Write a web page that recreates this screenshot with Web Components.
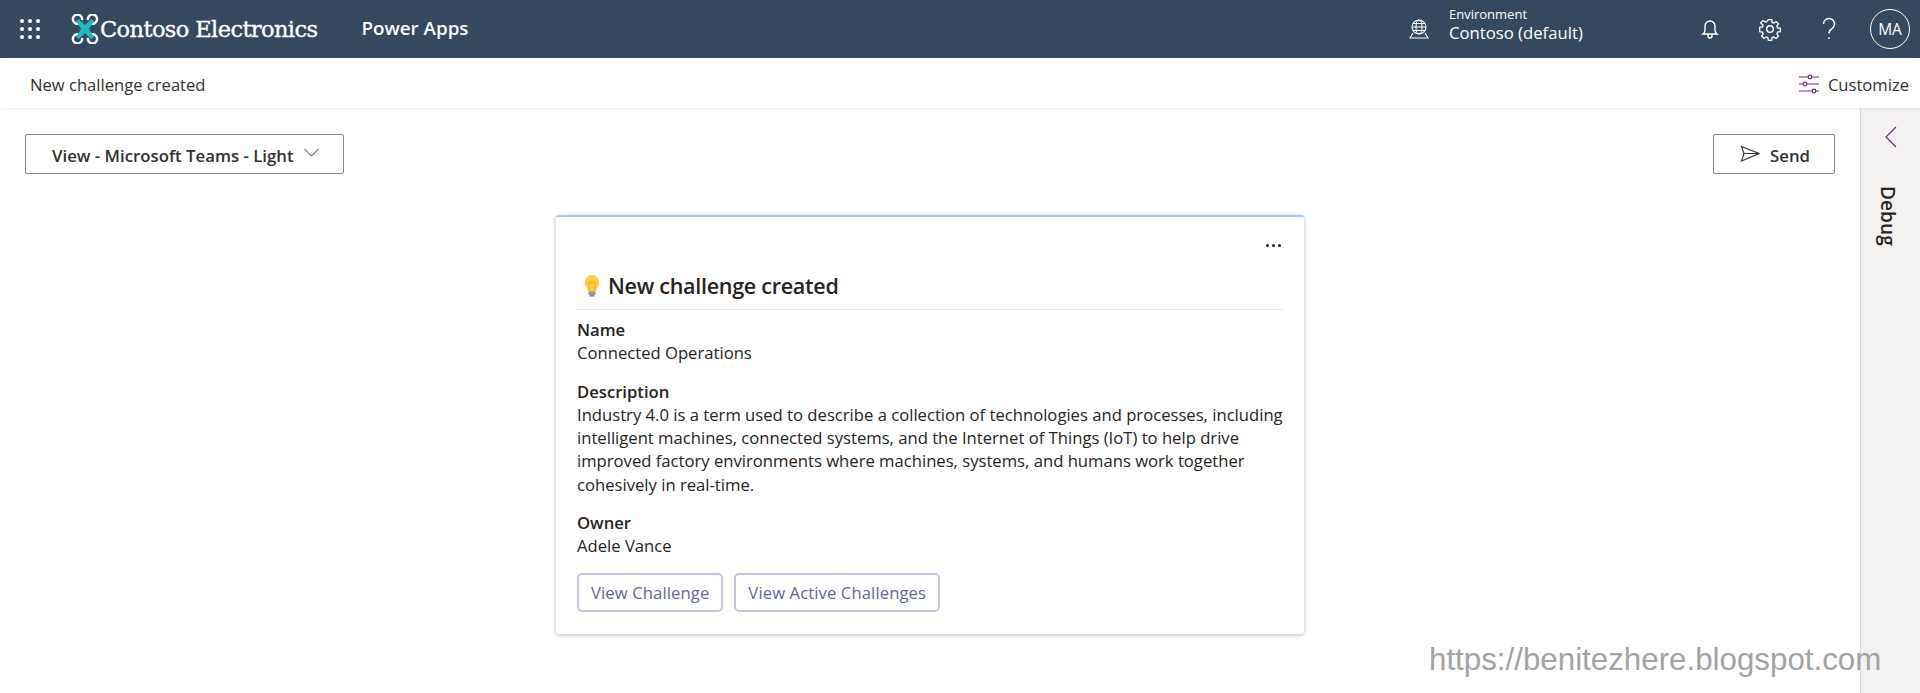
<!DOCTYPE html>
<html lang="en"><head><meta charset="utf-8"><title>Contoso</title>
<style>
html,body{margin:0;height:100%;overflow:hidden;background:#fff}
body{font-family:"Open Sans","Noto Sans",sans-serif;color:#252423}
</style></head><body>
<app-shell>
<top-bar></top-bar>
<sub-bar>New challenge created</sub-bar>
<main-area>
<tool-row></tool-row>
<adaptive-card></adaptive-card>
</main-area>
<debug-panel></debug-panel>
<water-mark>https://benitezhere.blogspot.com</water-mark>
</app-shell>
<script>
const def=(n,html)=>customElements.define(n,class extends HTMLElement{constructor(){super();this.attachShadow({mode:'open'}).innerHTML=html}});
def('app-shell',`<style>:host{display:grid;grid-template-columns:1fr 60px;grid-template-rows:58px 50px 1fr;height:693px;position:relative;width:1920px}
::slotted(top-bar),::slotted(sub-bar){grid-column:1/3}</style><slot></slot>`);
def('top-bar',`<style>:host{display:flex;align-items:center;background:#34495f;color:#fff;height:58px}
.waffle{margin-left:20px;width:20px;height:20px}
.logo{margin-left:30px;width:30px;height:30px}
.brand{font:400 22.500px "DejaVu Serif",serif;-webkit-text-stroke:.35px #fff;letter-spacing:-.6px;white-space:nowrap}
.app{font-weight:600;font-size:18.800px;margin-left:44px;margin-top:-2px}
.sp{flex:1}
.globe{width:22px;height:22px;margin-right:19px}
.env{display:flex;flex-direction:column;width:251px;margin-top:-9px}
.env small{font-size:13px;line-height:15px}
.env span{font-size:16.700px;line-height:21px}
.ic{width:20px;height:24px;display:flex;align-items:center;justify-content:center}
.av{width:38px;height:38px;border:1px solid #fff;border-radius:50%;display:flex;align-items:center;justify-content:center;font-size:15.500px;margin:0 10px 0 31px;box-sizing:content-box}
</style>
<svg class="waffle" viewBox="0 0 20 20" fill="#fff"><circle cx="2" cy="2" r="2"/><circle cx="10" cy="2" r="2"/><circle cx="18" cy="2" r="2"/><circle cx="2" cy="10" r="2"/><circle cx="10" cy="10" r="2"/><circle cx="18" cy="10" r="2"/><circle cx="2" cy="18" r="2"/><circle cx="10" cy="18" r="2"/><circle cx="18" cy="18" r="2"/></svg>
<svg class="logo" viewBox="0 0 30 30" fill="none"><g stroke="#fff" stroke-width="2.400"><path d="M9 9.500A4.600 4.600 0 1 1 12 6M21 9.500A4.600 4.600 0 1 0 18 6M9 20.500A4.600 4.600 0 1 0 12 24M21 20.500A4.600 4.600 0 1 1 18 24"/></g><path d="M6 7l3-2 6 6 6-6 3 2-5 8 5 8-3 2-6-6-6 6-3-2 5-8z" fill="#21b9bf"/></svg>
<span class="brand">Contoso Electronics</span>
<span class="app">Power Apps</span><span class="sp"></span>
<svg class="globe" viewBox="0 0 22 22" fill="none" stroke="#fff" stroke-width="1.100"><circle cx="11" cy="9" r="7"/><ellipse cx="11" cy="9" rx="3" ry="7"/><path d="M4 9h14M5 5.500h12M5 12.500h12M5 15l-3 5h18l-3-5"/></svg>
<div class="env"><small>Environment</small><span>Contoso (default)</span></div>
<div class="ic"><svg width="20" height="24" viewBox="0 0 20 24" fill="none" stroke="#fff" stroke-width="1.400"><path d="M3 17c1.500-1 2-2 2-4V9a5 5 0 0 1 10 0v4c0 2 .5 3 2 4zM8 17.500v1.500a2 2 0 0 0 4 0v-1.500"/></svg></div>
<div class="ic" style="margin-left:40px"><svg width="24" height="24" viewBox="0 0 22 22" fill="none" stroke="#fff" stroke-width="1.300" style="flex:none"><circle cx="11" cy="11" r="3"/><path d="M9.300 1.500h3.400l.5 2.800 1.700.7 2.300-1.600 2.400 2.400-1.600 2.300.7 1.700 2.800.5v3.400l-2.800.5-.7 1.700 1.600 2.300-2.400 2.400-2.300-1.600-1.700.7-.5 2.800H9.300l-.5-2.800-1.700-.7-2.300 1.600-2.400-2.400 1.600-2.300-.7-1.700-2.800-.5V9.300l2.800-.5.7-1.700L1.400 4.800l2.400-2.400 2.300 1.600 1.700-.7z" transform="translate(1.100 1.100) scale(.9)"/></svg></div>
<div class="ic" style="margin-left:39px"><svg width="16" height="24" viewBox="0 0 16 24" fill="none" stroke="#fff" stroke-width="1.400"><path d="M2.500 7a5.500 5.500 0 1 1 8.500 4.600c-2 1.300-3 2.200-3 4.900"/><circle cx="8" cy="21" r=".9" fill="#fff" stroke="none"/></svg></div>
<div class="av">MA</div>`);
def('sub-bar',`<style>:host{display:flex;align-items:center;justify-content:space-between;height:50px;box-shadow:0 1px 3px rgba(0,0,0,.08);position:relative;z-index:1;background:#fff;padding:2px 11px 0 30px;box-sizing:border-box;font-size:16.600px;color:#323130}
.c{display:flex;align-items:center;gap:9px}</style>
<span><slot></slot></span>
<span class="c"><svg width="20" height="20" viewBox="0 0 20 20" fill="none" stroke="#742774" stroke-width="1.200"><path d="M0 3h9M13 3h7M0 10h4M8 10h12M0 17h13M17 17h3"/><circle cx="11" cy="3" r="1.800"/><circle cx="6" cy="10" r="1.800"/><circle cx="15" cy="17" r="1.800"/></svg>Customize</span>`);
def('main-area',`<style>:host{display:block;min-width:0;padding:26px 25px 0 25px}</style><slot></slot>`);
def('tool-row',`<style>:host{display:flex;justify-content:space-between}
.b{box-sizing:border-box;height:40px;border:1px solid #8a8886;border-radius:2px;display:flex;align-items:center;font-weight:600;font-size:16.800px;padding-top:3px;color:#323130;background:#fff}
.v{width:319px;padding-left:26px}.s{width:122px;padding-left:26px;gap:10px}
svg{flex:none}</style>
<div class="b v">View - Microsoft Teams - Light<svg style="margin:-6px 0 0 10px" width="15" height="9" viewBox="0 0 15 9" fill="none" stroke="#323130"><path d="M.5 1l7 7 7-7"/></svg></div>
<div class="b s"><svg style="margin-top:-3px" width="20" height="18" viewBox="0 0 20 18" fill="none" stroke="#323130" stroke-width="1.100"><path d="M1.500 1.500L19 8.500 1.500 16 4 8.500zM4 8.500h15"/></svg>Send</div>`);
def('adaptive-card',`<style>:host{display:block;box-sizing:border-box;width:748px;height:419px;margin:41px 0 0 531px;border-top:2px solid #a6caf0;border-radius:3px;box-shadow:0 1px 4px rgba(0,0,0,.28);padding:0 21px;color:#252423;font-size:16.650px;line-height:23.300px;background:#fff;white-space:nowrap}
.more{display:flex;justify-content:flex-end;gap:3px;padding:27px 2px 0 0;height:4px}
.more i{width:3px;height:3px;background:#252423;border-radius:50%}
h2{margin:18px 0 0;height:44px;box-sizing:border-box;border-bottom:1px solid #e6e6e6;font-size:21.500px;font-weight:600;line-height:30px;padding-top:5px;letter-spacing:-.27px;display:flex;gap:8px}
h2 svg{margin:3px 0 0 7px}
b{display:block;font-weight:600}
p{margin:0 0 15px}
p.first{margin-top:8px}
.acts{display:flex;gap:11px;margin-top:0}
.acts span{height:39px;box-sizing:border-box;border:2px solid #c4c4e4;border-radius:5px;color:#6264a7;padding:0 12px;display:flex;align-items:center;white-space:nowrap;letter-spacing:.1px}
</style>
<div class="more"><i></i><i></i><i></i></div>
<h2><svg width="16" height="23" viewBox="0 0 18 24" preserveAspectRatio="none"><path d="M9 1a8 8 0 0 0-8 8c0 3.500 3 5 3.500 9h9C14 14 17 12.500 17 9a8 8 0 0 0-8-8z" fill="#fdd03b"/><path d="M6.500 18L5.500 9h7l-1 9" fill="none" stroke="#e8a317" stroke-width=".8"/><rect x="5" y="18" width="8" height="4" rx="1" fill="#9a9a9a"/><rect x="6.500" y="22" width="5" height="1.500" fill="#777"/></svg><span>New challenge created</span></h2>
<p class="first"><b>Name</b>Connected Operations</p>
<p><b>Description</b>Industry 4.0 is a term used to describe a collection of technologies and processes, including<br>intelligent machines, connected systems, and the Internet of Things (IoT) to help drive<br>improved factory environments where machines, systems, and humans work together<br>cohesively in real-time.</p>
<p><b>Owner</b>Adele Vance</p>
<div class="acts"><span>View Challenge</span><span>View Active Challenges</span></div>`);
def('debug-panel',`<style>:host{display:flex;flex-direction:column;align-items:center;background:#f3f2f1;border-left:1px solid #d9d8d7;box-sizing:border-box;position:relative;z-index:0}
svg{margin-top:18px}
span{writing-mode:vertical-rl;font-weight:600;font-size:19px;letter-spacing:.1px;margin:38px 5px 0 0;color:#252423}</style>
<svg width="12" height="22" viewBox="0 0 12 22" fill="none" stroke="#742774" stroke-width="1.200"><path d="M11 1L1 11l10 10"/></svg><span>Debug</span>`);
def('water-mark',`<style>:host{position:absolute;left:1429px;top:640px;font:31.300px/40px "Liberation Sans",sans-serif;color:#a3a3a3;white-space:nowrap;z-index:2}</style><slot></slot>`);
</script>
</body></html>
